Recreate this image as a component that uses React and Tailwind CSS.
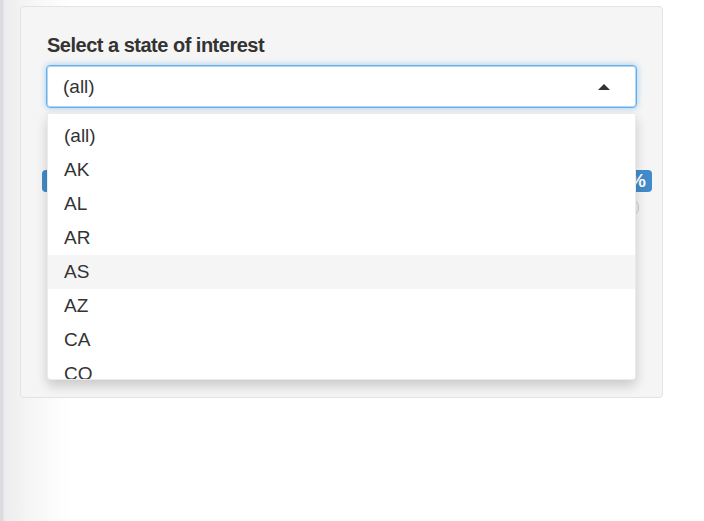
import React from "react";

const states = ["(all)", "AK", "AL", "AR", "AS", "AZ", "CA", "CO"];

const App = () => {
    const active = "AS";

    return (
        <div
            className="w-[704px] h-[521px] overflow-hidden flex bg-[linear-gradient(to_right,#dcdce0_0px,#dcdce0_3px,#ececec_4px,#f6f6f6_30px,#ffffff_70px)]"
            style={{ fontFamily: '"Liberation Sans", Arial, sans-serif' }}
        >
            <div className="ml-[20px] mt-[6px] w-[643px] h-[392px] bg-[#f5f5f5] border border-[#e3e3e3] rounded-[4px] px-[25px] pt-[26px]">
                <label className="block text-[20px] leading-[24px] font-bold tracking-[-0.5px] text-[#333] mb-[8px] pl-[1px]">
                    Select a state of interest
                </label>

                <div className="relative">
                    {/* select input */}
                    <div className="h-[43px] w-full bg-white border border-[#66afe9] rounded-[4px] shadow-[inset_0_0_0_1px_rgba(102,175,233,0.5),0_0_6px_rgba(102,175,233,0.6)] flex items-center pl-[16px] relative">
                        <span className="text-[19px] text-[#333] leading-none">(all)</span>
                        <span className="absolute right-[26px] top-[18px] w-0 h-0 border-l-[6px] border-r-[6px] border-b-[6px] border-l-transparent border-r-transparent border-b-[#333]" />
                    </div>

                    {/* dropdown */}
                    <div className="absolute z-10 left-[1px] top-[48px] w-[589px] h-[267px] bg-white border border-[rgba(0,0,0,0.08)] rounded-b-[4px] shadow-[0_6px_12px_rgba(0,0,0,0.175)] overflow-hidden pt-[5px]">
                        {states.map((s) => (
                            <div
                                key={s}
                                className={
                                    s === active
                                        ? "h-[34px] flex items-center pl-[16px] bg-[#f5f5f5] text-[19px] text-[#333]"
                                        : "h-[34px] flex items-center pl-[16px] text-[19px] text-[#333]"
                                }
                            >
                                {s}
                            </div>
                        ))}
                    </div>
                </div>

                {/* slider (under the dropdown) */}
                <div className="mt-[62px] relative h-[48px]">
                    <div className="flex justify-between -ml-[4px] -mr-[15px]">
                        <span className="h-[22px] px-[6px] bg-[#428bca] text-white text-[14px] leading-[22px] rounded-[4px]">
                            0%
                        </span>
                        <span className="h-[22px] px-[6px] bg-[#428bca] text-white text-[19px] font-bold leading-[22px] rounded-[4px]">
                            100%
                        </span>
                    </div>
                    <div className="mt-[8px] h-[15px] ml-[4px] mr-[-2px] bg-[#eeeeee] border border-[#cfcfcf] rounded-[6px]" />
                </div>
            </div>
        </div>
    );
};

export default App;
